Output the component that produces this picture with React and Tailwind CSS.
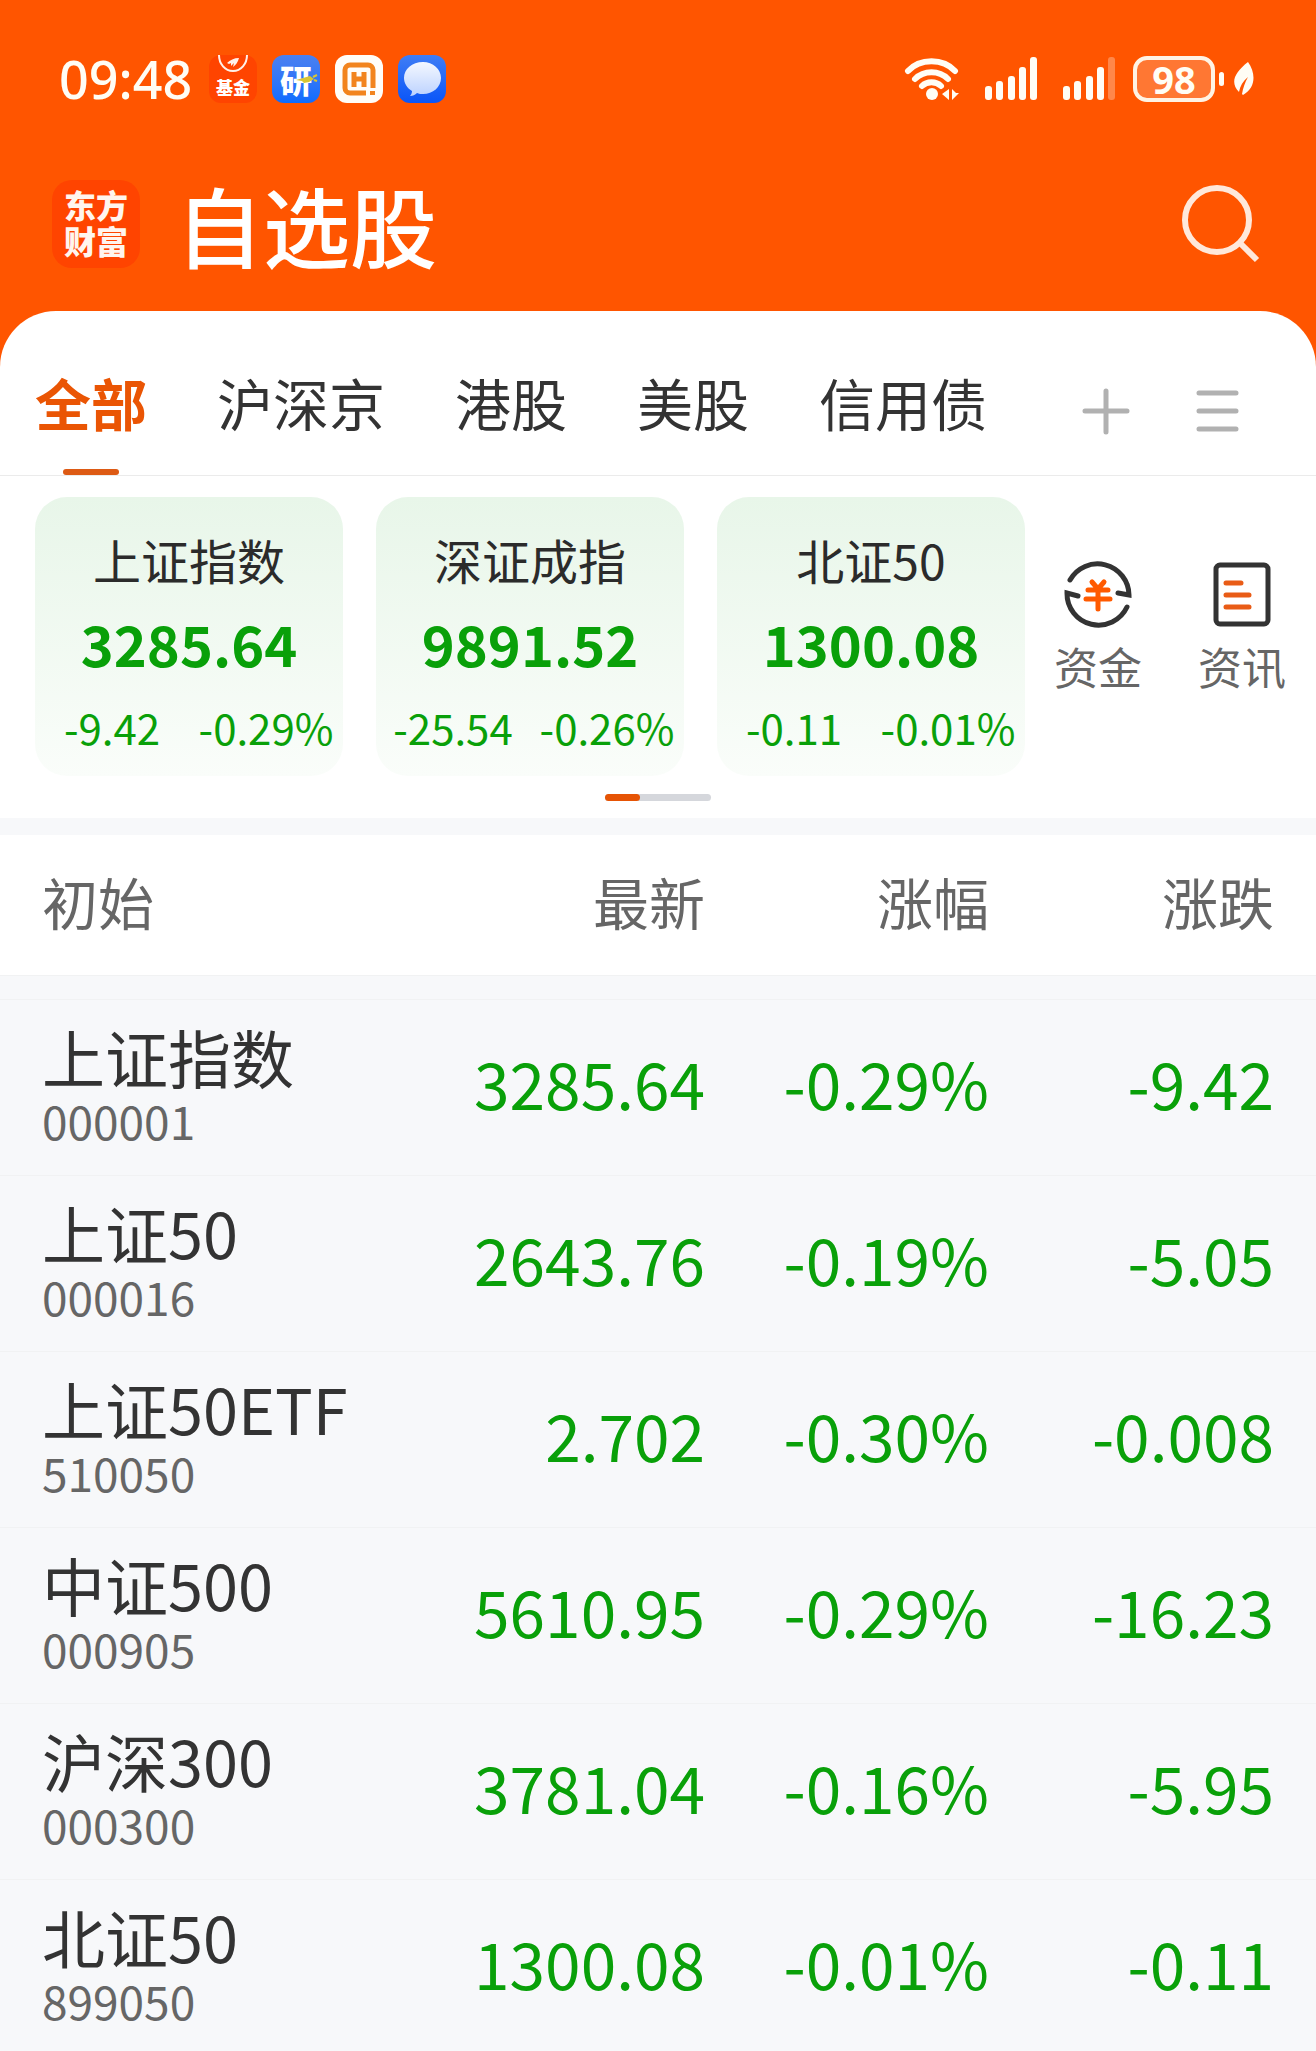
import React, { useState } from 'react';

const TABS = ['全部', '沪深京', '港股', '美股', '信用债'];

const INDEXES = [
  { name: '上证指数', value: '3285.64', change: '-9.42', percent: '-0.29%' },
  { name: '深证成指', value: '9891.52', change: '-25.54', percent: '-0.26%' },
  { name: '北证50', value: '1300.08', change: '-0.11', percent: '-0.01%' },
];

const STOCKS = [
  { name: '上证指数', code: '000001', price: '3285.64', percent: '-0.29%', change: '-9.42' },
  { name: '上证50', code: '000016', price: '2643.76', percent: '-0.19%', change: '-5.05' },
  { name: '上证50ETF', code: '510050', price: '2.702', percent: '-0.30%', change: '-0.008' },
  { name: '中证500', code: '000905', price: '5610.95', percent: '-0.29%', change: '-16.23' },
  { name: '沪深300', code: '000300', price: '3781.04', percent: '-0.16%', change: '-5.95' },
  { name: '北证50', code: '899050', price: '1300.08', percent: '-0.01%', change: '-0.11' },
];

const FundAppIcon = () => (
  <div className="flex h-12 w-12 flex-col items-center rounded-xl bg-[#ff4400]">
    <svg className="h-6 w-12 shrink-0" viewBox="0 0 48 24" fill="none">
      <path d="M10 0c0 9 6 16 14 16s14-7 14-16" stroke="#fff0e8" strokeWidth="2" />
      <path d="M18 8c3-3 7-5 12-5-1 4-3 7-6 9l1-4-3 3v-3l-2 1z" fill="#fff0e8" />
    </svg>
    <span className="text-[17px] leading-4 font-black text-white">基金</span>
  </div>
);

const ResearchAppIcon = () => (
  <div className="relative flex h-12 w-12 items-center justify-center rounded-xl bg-linear-to-b from-[#4a80f0] to-[#0a6cff]">
    <span className="text-[32px] leading-8 font-black text-white">研</span>
    <svg className="absolute top-0 left-0 h-12 w-12" viewBox="0 0 48 48">
      <path d="M24 25l14-4 4 3-5 3-5 1-2-2z" fill="#d8c534" />
      <path d="M41 22l4-2M42 25l3 1" stroke="#d8c534" strokeWidth="2" />
    </svg>
  </div>
);

const HomeAppIcon = () => (
  <svg className="h-12 w-12" viewBox="0 0 48 48" fill="none">
    <rect width="48" height="48" rx="12" fill="#fffdf8" />
    <path
      d="M31 38H15a5 5 0 0 1-5-5V15a5 5 0 0 1 5-5h18a5 5 0 0 1 5 5v18"
      stroke="#f2841d"
      strokeWidth="5"
    />
    <path d="M19 17v15M29 17v15M19 24h10" stroke="#f2841d" strokeWidth="5" />
    <path d="M35 36h5v4h-5z" fill="#f2841d" />
  </svg>
);

const MessageAppIcon = () => (
  <svg className="h-12 w-12" viewBox="0 0 48 48">
    <defs>
      <linearGradient id="message-bg" x1="0" y1="0" x2="0" y2="1">
        <stop offset="0" stopColor="#3f7df5" />
        <stop offset="1" stopColor="#0a55f8" />
      </linearGradient>
      <linearGradient id="message-bubble" x1="0" y1="0" x2="0" y2="1">
        <stop offset="0" stopColor="#f4f8ff" />
        <stop offset="1" stopColor="#bcd2ff" />
      </linearGradient>
    </defs>
    <rect width="48" height="48" rx="12" fill="url(#message-bg)" />
    <path
      d="M25 7c10 0 18 7 18 16s-8 16-18 16c-2 0-4 0-6-1-2 2-4 3-7 3 1-1 2-3 2-5-5-3-8-8-8-13C6 14 14 7 25 7z"
      fill="url(#message-bubble)"
    />
  </svg>
);

const WifiIcon = () => (
  <svg className="h-11 w-14" viewBox="0 0 56 44" fill="none">
    <g stroke="#fffdf5" strokeWidth="6" strokeLinecap="round">
      <path d="M4 14C16 1 39 1 51 14" />
      <path d="M11 22c9-9 24-9 33 0" />
      <path d="M18 29c5-5 14-5 19 0" />
    </g>
    <circle cx="28" cy="37" r="6" fill="#fffdf5" />
    <path d="M45 32v11l-7-6zM48 32v11l7-7h-3z" fill="#fffdf5" />
  </svg>
);

const SignalIcon = ({ weak }) => (
  <svg className="h-11 w-14" viewBox="0 0 56 44" fill="#fffdf5">
    <rect x="1" y="29" width="7" height="14" rx="3" />
    <rect x="12" y="24" width="7" height="19" rx="3" />
    <rect x="24" y="19" width="7" height="24" rx="3" />
    <rect x="35" y="10" width="7" height="33" rx="3" />
    <rect x="46" y="0" width="7" height="43" rx="3" opacity={weak ? 0.3 : 1} />
  </svg>
);

const LeafIcon = () => (
  <svg className="h-9 w-6" viewBox="0 0 24 36">
    <path
      d="M16 1c8 11 8 26-5 33l-1-1c1-6 3-12 6-17-5 4-8 9-9 15C-2 22 2 12 16 1z"
      fill="#fffdf5"
    />
  </svg>
);

const StatusBar = () => (
  <div className="flex items-center pt-[55px] pr-[60px] pl-[59px]">
    <time className="w-[150px] font-['Noto_Sans','Noto_Sans_CJK_SC',sans-serif] text-[52px] leading-12 font-medium text-[#fffdf5]">
      09:48
    </time>
    <div className="flex gap-[15px]">
      <FundAppIcon />
      <ResearchAppIcon />
      <HomeAppIcon />
      <MessageAppIcon />
    </div>
    <div className="ml-auto flex items-center">
      <div className="mr-6">
        <WifiIcon />
      </div>
      <div className="mr-[22px]">
        <SignalIcon />
      </div>
      <div className="mr-[15px]">
        <SignalIcon weak />
      </div>
      <div className="flex h-[46px] w-[82px] items-center justify-center rounded-[14px] border-4 border-[#fff3e4] bg-[#ff7733] font-['Noto_Sans','Noto_Sans_CJK_SC',sans-serif] text-[38px] leading-9 font-bold text-[#fffdf5]">
        98
      </div>
      <div className="mr-2 ml-1 h-[14px] w-[5px] rounded-sm bg-[#fffdf5]" />
      <LeafIcon />
    </div>
  </div>
);

const TitleBar = () => (
  <div className="flex items-center px-[52px] pt-[77px] pb-[43px]">
    <div className="flex h-[88px] w-[88px] items-center justify-center rounded-[20px] bg-[#ff4400] pb-1 text-[32px] leading-9 font-black text-[#fff5ee]">
      <div className="text-center">
        东方
        <br />
        财富
      </div>
    </div>
    <h1 className="ml-9 text-[87px] leading-[88px] font-medium text-white">自选股</h1>
    <button type="button" aria-label="搜索" className="mr-[2px] ml-auto">
      <svg className="h-20 w-20" viewBox="0 0 80 80" fill="none" stroke="#ffe8da" strokeWidth="6">
        <circle cx="35" cy="36" r="32" />
        <path d="M58 59l17 17" />
      </svg>
    </button>
  </div>
);

const TabBar = ({ active, onChange }) => (
  <nav className="flex items-center border-b border-[#ebebeb] px-[35px] pt-[51px]">
    <div className="flex gap-[70px]">
      {TABS.map((tab) => (
        <button
          key={tab}
          type="button"
          onClick={() => onChange(tab)}
          className={`flex flex-col items-center text-[56px] leading-20 ${
            active === tab ? 'font-bold text-[#ea5504]' : 'text-[#333333]'
          }`}
        >
          {tab}
          <span
            className={`mt-[27px] h-[6px] w-14 rounded-full ${
              active === tab ? 'bg-[#dd5a14]' : 'bg-transparent'
            }`}
          />
        </button>
      ))}
    </div>
    <div className="mr-[39px] ml-auto flex gap-16 pb-4">
      <button type="button" aria-label="添加">
        <svg className="h-12 w-12" viewBox="0 0 48 48" stroke="#b1b1b1" strokeWidth="5" strokeLinecap="round">
          <path d="M24 4v41M3 24h42" />
        </svg>
      </button>
      <button type="button" aria-label="管理分组">
        <svg className="h-12 w-12" viewBox="0 0 48 48" stroke="#b1b1b1" strokeWidth="5" strokeLinecap="round">
          <path d="M5 6h37M5 24h37M5 42h37" />
        </svg>
      </button>
    </div>
  </nav>
);

const IndexCard = ({ item }) => (
  <div className="h-[279px] w-[308px] rounded-[32px] bg-linear-to-b from-[#e8f6e9] to-[#fafdfa] pt-[30px] text-center text-[#09a009]">
    <div className="text-[48px] leading-16 text-[#2b2b2b]">{item.name}</div>
    <div className="mt-5 text-[56px] leading-16 font-bold">{item.value}</div>
    <div className="mt-5 grid grid-cols-2 text-[42px] leading-16">
      <span>{item.change}</span>
      <span>{item.percent}</span>
    </div>
  </div>
);

const Shortcut = ({ label, children }) => (
  <a href="#" className="flex flex-col items-center text-[44px] leading-16 text-[#666666]">
    {children}
    <span className="mt-1">{label}</span>
  </a>
);

const IndexStrip = () => (
  <section className="px-[35px] pt-[21px] pb-[17px]">
    <div className="flex items-center">
      <div className="flex gap-[33px]">
        {INDEXES.map((item) => (
          <IndexCard key={item.name} item={item} />
        ))}
      </div>
      <div className="-mr-[5px] ml-auto flex gap-14 pb-[18px]">
        <Shortcut label="资金">
          <svg className="h-[72px] w-[72px]" viewBox="0 0 72 72" fill="none" strokeLinecap="round">
            <g stroke="#333333" strokeWidth="5">
              <path d="M8 22A31.5 31.5 0 0 1 67 37l-11-2" />
              <path d="M65 49A31.5 31.5 0 0 1 5 35l11 3" />
            </g>
            <path
              d="M30 24l6 7 6-7M26 32h20M24 41h24M36 31v20"
              stroke="#ff5a00"
              strokeWidth="5"
            />
          </svg>
        </Shortcut>
        <Shortcut label="资讯">
          <svg className="h-[72px] w-[72px]" viewBox="0 0 72 72" fill="none" strokeLinecap="round">
            <rect x="10" y="7" width="52" height="59" rx="4" stroke="#333333" strokeWidth="5" />
            <path d="M20 25h15M20 37h23M20 49h23" stroke="#e95c16" strokeWidth="5" />
          </svg>
        </Shortcut>
      </div>
    </div>
    <div className="mx-auto mt-[18px] h-[7px] w-[106px] rounded-full bg-[#d5d7dc]">
      <div className="h-[7px] w-[35px] rounded-full bg-[#e65405]" />
    </div>
  </section>
);

const StockTable = () => (
  <table className="w-full table-fixed border-separate border-spacing-0 text-right">
    <colgroup>
      <col />
      <col className="w-[284px]" />
      <col className="w-[284px]" />
      <col className="w-[327px]" />
    </colgroup>
    <thead className="bg-white text-[56px] leading-20 text-[#666666]">
      <tr>
        <th className="h-[140px] pb-2 pl-[42px] text-left font-normal">初始</th>
        <th className="pb-2 font-normal">最新</th>
        <th className="pb-2 font-normal">涨幅</th>
        <th className="pr-[42px] pb-2 font-normal">涨跌</th>
      </tr>
    </thead>
    <tbody className="text-[64px] leading-20 text-[#09a009]">
      <tr aria-hidden="true">
        <td colSpan={4} className="h-[25px] border-y border-[#f1f2f3]" />
      </tr>
      {STOCKS.map((stock) => (
        <tr key={stock.code}>
          <td className="h-44 border-b border-[#f1f2f3] pb-2 pl-[42px] text-left">
            <div className="text-[63px] leading-18 text-[#333333]">{stock.name}</div>
            <div className="text-[46px] leading-14 text-[#666666]">{stock.code}</div>
          </td>
          <td className="border-b border-[#f1f2f3] pb-3">{stock.price}</td>
          <td className="border-b border-[#f1f2f3] pb-3">{stock.percent}</td>
          <td className="border-b border-[#f1f2f3] pr-[42px] pb-3">{stock.change}</td>
        </tr>
      ))}
    </tbody>
  </table>
);

const App = () => {
  const [activeTab, setActiveTab] = useState('全部');

  return (
    <div className="h-screen overflow-hidden bg-[#ff5500] font-['Noto_Sans_CJK_SC',sans-serif]">
      <header>
        <StatusBar />
        <TitleBar />
      </header>
      <main className="rounded-t-[56px] bg-white">
        <TabBar active={activeTab} onChange={setActiveTab} />
        <IndexStrip />
        <div className="bg-[#f7f8fa] pt-[17px]">
          <StockTable />
        </div>
      </main>
    </div>
  );
};

export default App;
